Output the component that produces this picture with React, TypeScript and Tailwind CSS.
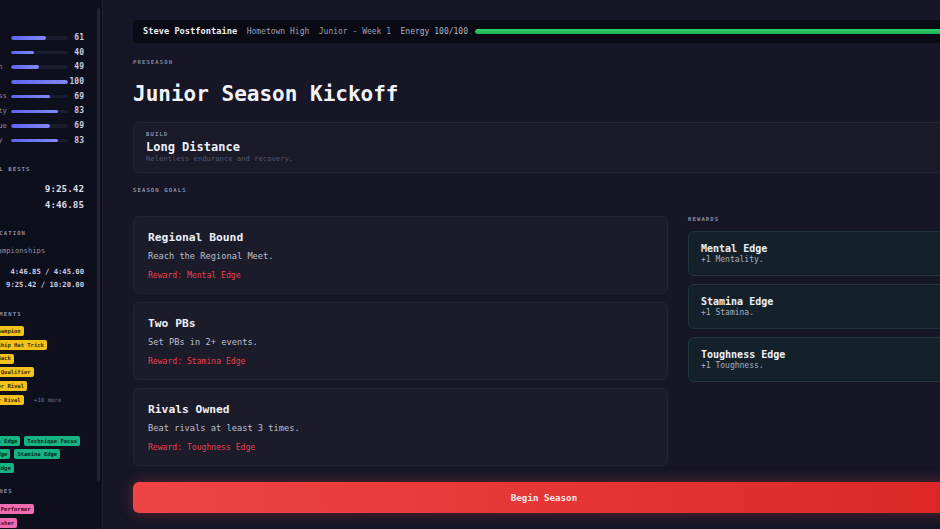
import React from "react";

const mono = { fontFamily: '"DejaVu Sans Mono", "Liberation Mono", monospace' };

const stats: [string, number][] = [
  ["Speed", 61],
  ["Power", 40],
  ["Strength", 49],
  ["Stamina", 100],
  ["Toughness", 69],
  ["Mentality", 83],
  ["Technique", 69],
  ["Recovery", 83],
];

function Label({ children, className = "" }: { children: React.ReactNode; className?: string }) {
  return (
    <div className={"h-[10px] flex items-center text-[5.6px] font-bold tracking-[1.1px] text-[#8a8ea6] uppercase " + className}>
      {children}
    </div>
  );
}

function Badge({ children, color }: { children: React.ReactNode; color: "y" | "g" | "p" }) {
  const cls =
    color === "y"
      ? "bg-[#f4c21b] text-[#3a2c00]"
      : color === "g"
      ? "bg-[#14b583] text-[#03261b]"
      : "bg-[#f06bb0] text-[#3d0a25]";
  return (
    <span className={"h-[10px] px-[3px] rounded-[2px] flex items-center whitespace-nowrap text-[5.5px] font-bold " + cls}>
      {children}
    </span>
  );
}

function Sidebar() {
  return (
    <div className="w-[147px] shrink-0 h-full flex bg-[#0e0f1d] border-r border-[#1d1e2e] ml-[-44px]">
      <div className="flex-1 min-w-0 pl-[12px] pr-[13px] pt-[14px] flex flex-col">
        <Label className="mb-[6.5px]">Stats</Label>
        {stats.map(([n, v]) => (
          <div key={n} className="h-[14.7px] flex items-center">
            <div className="w-[43px] shrink-0 text-[7.2px] text-[#8a8ea6] whitespace-nowrap">{n}</div>
            <div className="w-[57px] h-[3.5px] rounded-full bg-[#1b1c2e] overflow-hidden">
              <div
                className="h-full rounded-full bg-gradient-to-r from-[#5f63ee] to-[#8189f8]"
                style={{ width: `${v}%` }}
              />
            </div>
            <div className="flex-1 text-right text-[8px] font-bold text-[#c9cce0]">{v}</div>
          </div>
        ))}
        <Label className="mt-[16px]">Personal Bests</Label>
        <div className="mt-[7px] h-[16px] flex items-center justify-between">
          <span className="text-[7.2px] text-[#8a8ea6]">3200m</span>
          <span className="text-[9.3px] font-bold text-[#d7dae8]">9:25.42</span>
        </div>
        <div className="h-[16px] flex items-center justify-between">
          <span className="text-[7.2px] text-[#8a8ea6]">1600m</span>
          <span className="text-[9.3px] font-bold text-[#d7dae8]">4:46.85</span>
        </div>
        <Label className="mt-[15px]">Qualification</Label>
        <div className="mt-[7px] h-[12px] flex items-center text-[7.2px] text-[#8a8ea6] whitespace-nowrap ml-[-5px]">
          State Championships
        </div>
        <div className="mt-[8.5px] h-[13px] flex items-center justify-between">
          <span className="text-[7.2px] text-[#8a8ea6]">1600</span>
          <span className="text-[7.2px] font-bold text-[#c9cce0]">4:46.85 / 4:45.00</span>
        </div>
        <div className="h-[13px] flex items-center justify-between">
          <span className="text-[7.2px] text-[#8a8ea6]">3200</span>
          <span className="text-[7.2px] font-bold text-[#c9cce0]">9:25.42 / 10:20.00</span>
        </div>
        <Label className="mt-[17.5px]">Achievements</Label>
        <div className="mt-[7px] flex flex-col gap-[3.8px]">
          <div className="flex"><Badge color="y">League Champion</Badge></div>
          <div className="flex"><Badge color="y">Championship Hat Trick</Badge></div>
          <div className="flex"><Badge color="y">Back-to-Back</Badge></div>
          <div className="flex"><Badge color="y">Regional Qualifier</Badge></div>
          <div className="flex"><Badge color="y">Upset Over Rival</Badge></div>
          <div className="flex items-center gap-[10px]">
            <Badge color="y">Beat Your Rival</Badge>
            <span className="text-[5.8px] text-[#6d7190] whitespace-nowrap">+10 more</span>
          </div>
        </div>
        <Label className="mt-[15px]">Edges</Label>
        <div className="mt-[6px] flex flex-col gap-[3.5px]">
          <div className="flex gap-[4px]"><Badge color="g">Toughness Edge</Badge><Badge color="g">Technique Focus</Badge></div>
          <div className="flex gap-[4px]"><Badge color="g">Mental Edge</Badge><Badge color="g">Stamina Edge</Badge></div>
          <div className="flex gap-[4px]"><Badge color="g">Closing Edge</Badge></div>
        </div>
        <Label className="mt-[13px]">Milestones</Label>
        <div className="mt-[8px] flex flex-col gap-[4px]">
          <div className="flex"><Badge color="p">Big Race Performer</Badge></div>
          <div className="flex"><Badge color="p">Fast Finisher</Badge></div>
        </div>
      </div>
      <div className="w-[3px] shrink-0 pt-[8px] pb-[48px] mr-[2px]">
        <div className="w-full h-full rounded-full bg-[#23243a]" />
      </div>
    </div>
  );
}

const goals = [
  { t: "Regional Bound", d: "Reach the Regional Meet.", r: "Reward: Mental Edge" },
  { t: "Two PBs", d: "Set PBs in 2+ events.", r: "Reward: Stamina Edge" },
  { t: "Rivals Owned", d: "Beat rivals at least 3 times.", r: "Reward: Toughness Edge" },
];

const rewards = [
  { t: "Mental Edge", d: "+1 Mentality." },
  { t: "Stamina Edge", d: "+1 Stamina." },
  { t: "Toughness Edge", d: "+1 Toughness." },
];

function Main() {
  return (
    <div className="flex-1 min-w-0 pl-[30px] pt-[20px]">
      <div className="w-[822px]">
        <div className="h-[23px] rounded-[4px] bg-[#0a0a14] flex items-center pl-[10px] pr-[8px] gap-[9.5px] whitespace-nowrap">
          <span className="text-[8.7px] font-bold text-[#eef0f7]">Steve Postfontaine</span>
          <span className="text-[8px] text-[#9a9eb6]">Hometown High</span>
          <span className="text-[8px] text-[#9a9eb6]">Junior - Week 1</span>
          <span className="text-[8px] text-[#aeb2c6]">Energy 100/100</span>
          <div className="flex-1 h-[5px] rounded-full bg-[#1c2a22] ml-[-2px] overflow-hidden">
            <div className="h-full w-full rounded-full bg-gradient-to-b from-[#2fd16a] to-[#1fae52]" />
          </div>
        </div>
        <div className="mt-[15px] h-[8px] flex items-center text-[5.6px] font-bold tracking-[1.1px] text-[#7f839b]">PRESEASON</div>
        <div className="mt-[15px] h-[26px] flex items-center text-[21px] font-bold text-[#f2f3f8] leading-none">
          Junior Season Kickoff
        </div>
        <div className="mt-[15px] h-[51px] rounded-[6px] bg-[#1a1a29] border border-[#242437] pl-[12px] pt-[8px]">
          <div className="h-[6px] flex items-center text-[5.6px] font-bold tracking-[1.1px] text-[#8a8ea6]">BUILD</div>
          <div className="mt-[3px] h-[14px] flex items-center text-[12px] font-bold text-[#eef0f7]">Long Distance</div>
          <div className="mt-[0.5px] h-[9px] flex items-center text-[7.2px] text-[#545870]">Relentless endurance and recovery.</div>
        </div>
        <div className="mt-[14px] h-[6px] flex items-center text-[5.6px] font-bold tracking-[1.1px] text-[#8a8ea6]">SEASON GOALS</div>
        <div className="mt-[23px] grid grid-cols-[535px_1fr] gap-[20px]">
          <div className="flex flex-col gap-[8px]">
            {goals.map((g) => (
              <div key={g.t} className="h-[78px] rounded-[6px] bg-[#1b1b2a] border border-[#222335] pl-[14px] pt-[14px]">
                <div className="h-[14px] flex items-center text-[11.3px] font-bold text-[#eef0f7]">{g.t}</div>
                <div className="mt-[6.5px] h-[11px] flex items-center text-[8.7px] text-[#bcc0d0]">{g.d}</div>
                <div className="mt-[7.5px] h-[10px] flex items-center text-[8.1px] text-[#e8404b]">{g.r}</div>
              </div>
            ))}
          </div>
          <div className="flex flex-col">
            <div className="h-[6px] flex items-center text-[5.6px] font-bold tracking-[1.1px] text-[#8a8ea6]">REWARDS</div>
            <div className="mt-[9px] flex flex-col gap-[8px]">
              {rewards.map((r) => (
                <div key={r.t} className="h-[45px] rounded-[6px] bg-[#15212a] border border-[#1f363a] pl-[12px] pt-[10px]">
                  <div className="h-[12px] flex items-center text-[10px] font-bold text-[#eef0f7]">{r.t}</div>
                  <div className="mt-[1px] h-[10px] flex items-center text-[8px] text-[#a9b0c0]">{r.d}</div>
                </div>
              ))}
            </div>
          </div>
        </div>
        <div className="mt-[16px] h-[31px] rounded-[6px] bg-gradient-to-r from-[#ef4444] to-[#dc2626] shadow-[0_0_14px_rgba(239,68,68,0.35)] flex items-center justify-center text-[9.2px] font-bold text-[#fde8ea]">
          Begin Season
        </div>
      </div>
    </div>
  );
}

export default function App() {
  return (
    <div className="w-[940px] h-[529px] overflow-hidden bg-[#161626]" style={mono}>
      <div className="flex h-full">
        <Sidebar />
        <Main />
      </div>
    </div>
  );
}
